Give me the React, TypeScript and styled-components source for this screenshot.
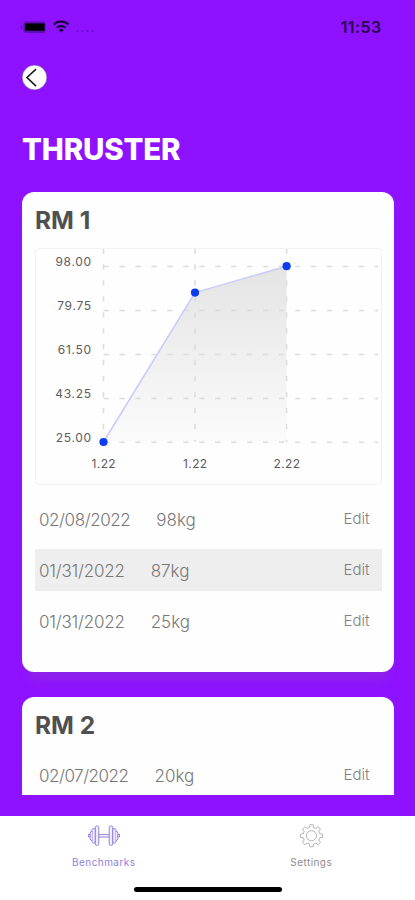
import React from "react";
import styled, { createGlobalStyle } from "styled-components";

const PURPLE = "#8e12ff";

const GlobalStyle = createGlobalStyle`
  * { box-sizing: border-box; }
  body { margin: 0; background: ${PURPLE}; }
`;

const Screen = styled.div`
  width: 415px;
  height: 900px;
  display: flex;
  flex-direction: column;
  overflow: hidden;
  background: ${PURPLE};
  font-family: Inter, "Liberation Sans", sans-serif;
`;

const StatusBar = styled.header`
  height: 54px;
  flex: none;
  display: flex;
  align-items: center;
  justify-content: space-between;
  padding: 0 33.5px 0 20px;
`;

const Time = styled.span`
  font-size: 16px;
  line-height: 20px;
  font-weight: 600;
  letter-spacing: 0.4px;
  color: #28054c;
`;

const Header = styled.div`
  height: 138px;
  flex: none;
  padding: 11px 22px 0;
`;

const BackButton = styled.button`
  display: block;
  width: 26px;
  height: 26px;
  margin: 0;
  padding: 0;
  border: 0;
  background: none;
`;

const Title = styled.h1`
  margin: 40px 0 0;
  font-size: 29.5px;
  line-height: 36px;
  font-weight: 800;
  letter-spacing: -0.2px;
  color: #fff;
`;

const ScrollArea = styled.main`
  height: 603px;
  flex: none;
  overflow: hidden;
  display: flex;
  flex-direction: column;
  gap: 25px;
  padding: 0 21px 0 22px;
`;

const Card = styled.section<{ $height: number }>`
  flex: none;
  height: ${(p) => p.$height}px;
  padding: 13px 13px 0;
  border-radius: 12px;
  background: #fefefe;
  box-shadow: 0 14px 9px -5px rgba(145, 55, 205, 0.4);
`;

const CardTitle = styled.h2`
  margin: 0;
  font-size: 24.5px;
  line-height: 30px;
  font-weight: 700;
  color: #505050;
`;

const ChartFrame = styled.div`
  width: 347px;
  height: 237px;
  margin-top: 13px;
  border: 1px solid #f3f3f3;
  border-radius: 4px;

  svg { display: block; }
`;

const Records = styled.div<{ $top: number }>`
  display: flex;
  flex-direction: column;
  gap: 8.6px;
  margin-top: ${(p) => p.$top}px;
`;

const Row = styled.div<{ $shaded?: boolean }>`
  width: 346.5px;
  height: 42.4px;
  display: flex;
  align-items: center;
  padding: 2px 12px 0 4px;
  font-size: 17px;
  font-weight: 300;
  color: #777;
  background: ${(p) => (p.$shaded ? "#eeeeee" : "transparent")};
`;

const RowDate = styled.span<{ $tracking: number }>`
  letter-spacing: ${(p) => p.$tracking}px;
  margin-right: 26px;
`;

const Edit = styled.span`
  margin-left: auto;
  font-size: 15px;
  line-height: 20px;
  padding-bottom: 2px;
  color: #808080;
`;

const TabBar = styled.nav`
  flex: none;
  height: 84px;
  margin-top: 21px;
  display: grid;
  grid-template-columns: 1fr 1fr;
  grid-template-rows: 70px 5px;
  background: #fff;
`;

const Tab = styled.div<{ $color: string }>`
  display: flex;
  flex-direction: column;
  align-items: center;
  padding-top: 7px;
  gap: 6px;
  color: ${(p) => p.$color};
  font-size: 10px;
  line-height: 14px;
  font-weight: 400;
  letter-spacing: 0.45px;
`;

const HomeIndicator = styled.div`
  grid-column: 1 / -1;
  justify-self: center;
  width: 148px;
  height: 5px;
  margin-top: 1px;
  border-radius: 3px;
  background: #000;
`;

const StatusIcons = () => (
  <svg width="80" height="20" viewBox="20 17 80 20">
    <rect x="23.5" y="21.5" width="22" height="11.5" rx="2.5" fill="#5b0fae" />
    <rect x="25" y="23.4" width="19.6" height="7.4" rx="0.8" fill="#000" />
    <path d="M22.3 25.2v4q-1.5-.6-1.5-2t1.5-2z" fill="#5b0fae" />
    <g fill="none" stroke="#16002f" strokeWidth="2">
      <path d="M53.8 24.5a10.6 10.6 0 0 1 14.8 0" />
      <path d="M56.8 27.7a6.3 6.3 0 0 1 8.8 0" />
    </g>
    <path d="M61.2 32.5l-2.4-2.6a3.5 3.5 0 0 1 4.8 0z" fill="#16002f" />
    <g fill="#6a0dcb">
      <circle cx="77.5" cy="31" r="1.1" />
      <circle cx="82.5" cy="31" r="1.1" />
      <circle cx="87.5" cy="31" r="1.1" />
      <circle cx="92.5" cy="31" r="1.1" />
    </g>
  </svg>
);

const BackIcon = () => (
  <svg width="26" height="26" viewBox="0 0 26 26">
    <circle cx="12.5" cy="12.5" r="12.4" fill="#fff" stroke="#6330a0" strokeWidth="0.6" />
    <path d="M14 4.2 5 12.5l9 8.6" fill="none" stroke="#1c1c1c" strokeWidth="1.6" />
  </svg>
);

const GRID_Y = [266.4, 310.4, 354.4, 398.4, 442.2];
const Y_LABELS = ["98.00", "79.75", "61.50", "43.25", "25.00"];
const GRID_X = [103.5, 195, 286.6];
const X_LABELS = ["1.22", "1.22", "2.22"];
const POINTS = [
  [103.5, 442],
  [195, 292.6],
  [286.6, 266.2],
];

const Chart = () => (
  <svg width="345" height="235" viewBox="36 249 345 235">
    <defs>
      <linearGradient id="area" x1="0" y1="0" x2="0" y2="1">
        <stop offset="0" stopColor="#e4e4e4" />
        <stop offset="1" stopColor="#fbfbfb" />
      </linearGradient>
    </defs>
    <path d="M103.5 442 195 292.6 286.6 266.2V442z" fill="url(#area)" />
    <g stroke="#dcdcdc" strokeWidth="1.5" strokeDasharray="5.3 10.65">
      {GRID_Y.map((y) => (
        <line key={y} x1="103.5" x2="378" y1={y} y2={y} />
      ))}
      {GRID_X.map((x) => (
        <line key={x} x1={x} x2={x} y1="248.4" y2="442" />
      ))}
    </g>
    <path d="M103.5 442 195 292.6 286.6 266.2" fill="none" stroke="#c9cdf8" strokeWidth="1.6" />
    {POINTS.map(([x, y]) => (
      <circle key={x} cx={x} cy={y} r="4.1" fill="#0b3df0" />
    ))}
    <g fill="#5c5c5c" fontSize="12">
      {Y_LABELS.map((label, i) => (
        <text key={label} x="91.8" y={GRID_Y[i] - 0.3} textAnchor="end" letterSpacing="0.7">
          {label}
        </text>
      ))}
      {X_LABELS.map((label, i) => (
        <text key={i} x={GRID_X[i] + 0.3} y="468" textAnchor="middle" letterSpacing="0.35">
          {label}
        </text>
      ))}
    </g>
  </svg>
);

const DumbbellIcon = () => (
  <svg width="34" height="26" viewBox="0 0 34 26" fill="#f1edfc" stroke="#8a78db" strokeWidth="0.9">
    <path d="M11.5 11.4h11v2.6h-11z" />
    <rect x="8.2" y="3" width="3.6" height="19.4" rx="1.5" />
    <rect x="22.2" y="3" width="3.6" height="19.4" rx="1.5" />
    <path d="M8.2 5.6H6.8q-1.8 0-1.8 1.8v10.8q0 1.8 1.8 1.8h1.4zM25.8 5.6h1.4q1.8 0 1.8 1.8v10.8q0 1.8-1.8 1.8h-1.4z" />
    <path d="M5 8q-1.8.3-1.8 2v5.6q0 1.7 1.8 2M29 8q1.8.3 1.8 2v5.6q0 1.7-1.8 2M3.2 11.5H1.5v2.4h1.7M30.8 11.5h1.7v2.4h-1.7" />
  </svg>
);

const GearIcon = () => (
  <svg width="26" height="26" viewBox="0 0 26 26" fill="none" stroke="#b4b4b4" strokeWidth="1">
    <circle cx="13.5" cy="12.7" r="5.1" />
    <path
      transform="translate(.5 -.3)"
      d="M10.9 4.8 11.4 2h3.2l.5 2.8 2.2.9 2.4-1.6L22 6.3l-1.7 2.4.9 2.2 2.8.5v3.2l-2.8.5-.9 2.2 1.7 2.4-2.3 2.2-2.4-1.6-2.2.9-.5 2.8h-3.2l-.5-2.8-2.2-.9-2.4 1.6L4 19.7l1.7-2.4-.9-2.2-2.8-.5v-3.2l2.8-.5.9-2.2L4 6.3l2.3-2.2 2.4 1.6z"
      strokeLinejoin="round"
    />
  </svg>
);

type RecordItem = { date: string; weight: string; tracking: number };

const RM1: RecordItem[] = [
  { date: "02/08/2022", weight: "98kg", tracking: -0.42 },
  { date: "01/31/2022", weight: "87kg", tracking: -0.22 },
  { date: "01/31/2022", weight: "25kg", tracking: -0.22 },
];
const RM2: RecordItem[] = [{ date: "02/07/2022", weight: "20kg", tracking: -0.48 }];

const RecordList = ({ items, top }: { items: RecordItem[]; top: number }) => (
  <Records $top={top}>
    {items.map((item, i) => (
      <Row key={i} $shaded={i % 2 === 1}>
        <RowDate $tracking={item.tracking}>{item.date}</RowDate>
        <span>{item.weight}</span>
        <Edit>Edit</Edit>
      </Row>
    ))}
  </Records>
);

export default function App() {
  return (
    <Screen>
      <GlobalStyle />
      <StatusBar>
        <StatusIcons />
        <Time>11:53</Time>
      </StatusBar>
      <Header>
        <BackButton aria-label="Back">
          <BackIcon />
        </BackButton>
        <Title>THRUSTER</Title>
      </Header>
      <ScrollArea>
        <Card $height={480.4}>
          <CardTitle>RM 1</CardTitle>
          <ChartFrame>
            <Chart />
          </ChartFrame>
          <RecordList items={RM1} top={12.6} />
        </Card>
        <Card $height={200}>
          <CardTitle>RM 2</CardTitle>
          <RecordList items={RM2} top={13} />
        </Card>
      </ScrollArea>
      <TabBar>
        <Tab $color="#9080e0">
          <DumbbellIcon />
          Benchmarks
        </Tab>
        <Tab $color="#8c8c8c">
          <GearIcon />
          Settings
        </Tab>
        <HomeIndicator />
      </TabBar>
    </Screen>
  );
}
